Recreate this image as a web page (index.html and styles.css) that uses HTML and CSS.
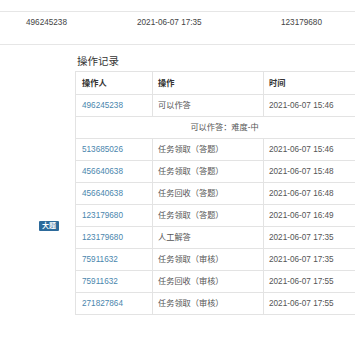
FILE: index.html
```html
<!DOCTYPE html>
<html lang="zh">
<head>
<meta charset="utf-8">
<link rel="stylesheet" href="styles.css">
</head>
<body>
<div class="list">
  <div class="main-row">
    <span>496245238</span>
    <span>2021-06-07 17:35</span>
    <span>123179680</span>
  </div>
  <div class="detail">
    <div class="badge-col"><span class="badge">大题</span></div>
    <div class="log">
      <h3 class="log-title">操作记录</h3>
      <table class="log-table">
        <colgroup><col class="c1"><col class="c2"><col class="c3"></colgroup>
        <thead>
          <tr><th>操作人</th><th>操作</th><th>时间</th></tr>
        </thead>
        <tbody>
          <tr><td class="link">496245238</td><td>可以作答</td><td>2021-06-07 15:46</td></tr>
          <tr><td colspan="3" class="merged">可以作答：难度-中</td></tr>
          <tr><td class="link">513685026</td><td>任务领取（答题）</td><td>2021-06-07 15:46</td></tr>
          <tr><td class="link">456640638</td><td>任务领取（答题）</td><td>2021-06-07 15:48</td></tr>
          <tr><td class="link">456640638</td><td>任务回收（答题）</td><td>2021-06-07 16:48</td></tr>
          <tr><td class="link">123179680</td><td>任务领取（答题）</td><td>2021-06-07 16:49</td></tr>
          <tr><td class="link">123179680</td><td>人工解答</td><td>2021-06-07 17:35</td></tr>
          <tr><td class="link">75911632</td><td>任务领取（审核）</td><td>2021-06-07 17:35</td></tr>
          <tr><td class="link">75911632</td><td>任务回收（审核）</td><td>2021-06-07 17:55</td></tr>
          <tr><td class="link">271827864</td><td>任务领取（审核）</td><td>2021-06-07 17:55</td></tr>
        </tbody>
      </table>
    </div>
  </div>
</div>
</body>
</html>
```
FILE: styles.css
```css
html, body {
  margin: 0;
  padding: 0;
  overflow: hidden;
  background: #fff;
}
body {
  font-family: "Liberation Sans", "Noto Sans CJK SC", sans-serif;
  font-size: 8.2px;
  color: #555;
}
.list {
  margin-top: 11px;
  border-top: 1px solid #e6e6e6;
}
.main-row {
  display: grid;
  grid-template-columns: 111px 144px 1fr;
  padding: 5px 0 16px 26px;
  line-height: 11px;
  border-bottom: 1px solid #e6e6e6;
  color: #444;
}
.detail {
  display: grid;
  grid-template-columns: 75px 1fr;
  padding-top: 9px;
}
.badge-col {
  display: flex;
  align-items: center;
}
.badge {
  margin-left: 39px;
  width: 20px;
  height: 10px;
  line-height: 10px;
  text-align: center;
  font-size: 7px;
  font-weight: bold;
  color: #fff;
  background: #2d6a9b;
  border-radius: 1px;
}
.log {
  padding-bottom: 83px;
}
.log-title {
  margin: 0 0 3px 2px;
  font-size: 10.5px;
  line-height: 14px;
  font-weight: normal;
  color: #333;
}
.log-table {
  border-collapse: collapse;
  width: 298px;
  table-layout: fixed;
}
.c1 { width: 77px; }
.c2 { width: 111px; }
.c3 { width: 110px; }
.log-table th,
.log-table td {
  border: 1px solid #e3e3e3;
  padding: 0 0 0 6px;
  height: 21px;
  text-align: left;
  white-space: nowrap;
  line-height: 11px;
}
.log-table th {
  height: 22px;
  font-weight: bold;
  color: #333;
}
.log-table td + td,
.log-table th + th {
  padding-left: 5px;
}
.log-table td.link {
  color: #4a86ad;
}
.log-table td.merged {
  text-align: center;
  padding-left: 0;
}
```
